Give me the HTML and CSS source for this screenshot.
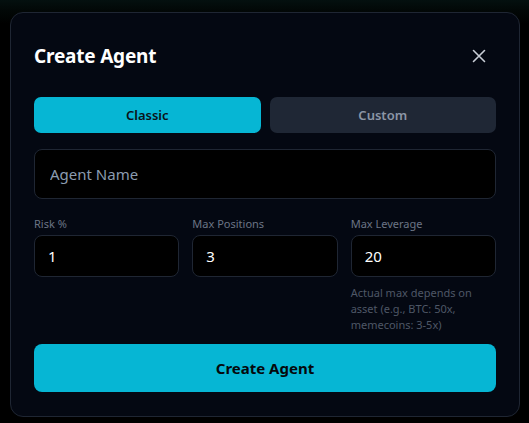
FILE: index.html
```html
<!DOCTYPE html>
<html lang="en">
  <head>
    <meta charset="UTF-8" />
    <title>Create Agent</title>
    <link rel="stylesheet" href="styles.css">
  </head>
  <body>
    <div class="modal">
      <div class="modal-header">
        <h2>Create Agent</h2>
        <button class="close" type="button" aria-label="Close">
          <svg width="14" height="14" viewBox="0 0 14 14">
            <path d="M1.5 1.5 L12.5 12.5 M12.5 1.5 L1.5 12.5" stroke="currentColor" stroke-width="1.6" stroke-linecap="round" fill="none" />
          </svg>
        </button>
      </div>

      <div class="tabs">
        <button class="tab active" type="button">Classic</button>
        <button class="tab" type="button">Custom</button>
      </div>

      <input class="name-input" type="text" placeholder="Agent Name" />

      <div class="fields">
        <div class="field">
          <label for="risk">Risk %</label>
          <input id="risk" type="text" value="1" />
        </div>
        <div class="field">
          <label for="max_pos">Max Positions</label>
          <input id="max_pos" type="text" value="3" />
        </div>
        <div class="field">
          <label for="max_lev">Max Leverage</label>
          <input id="max_lev" type="text" value="20" />
          <p class="hint">Actual max depends on asset (e.g., BTC: 50x, memecoins: 3-5x)</p>
        </div>
      </div>

      <button class="submit" type="button">Create Agent</button>
    </div>
  </body>
</html>
```

FILE: styles.css
```css
body {
  margin: 0;
  height: 423px;
  background: linear-gradient(#04100f 0, #020807 10px, #000 24px);
  font-family: "Noto Sans", sans-serif;
  padding: 12px 9px 0 10px;
  box-sizing: border-box;
}
.modal {
  background-color: #040812;
  border: 1px solid #1f2633;
  border-radius: 13px;
  padding: 23px;
  height: 405px;
  box-sizing: border-box;
}
.modal-header {
  display: flex;
  justify-content: space-between;
  align-items: center;
  height: 40px;
  margin-bottom: 21px;
}
.modal-header h2 {
  margin: 0;
  font-size: 19px;
  font-weight: 700;
  color: #fff;
  letter-spacing: -0.2px;
}
.close {
  background: none;
  border: none;
  color: #c9ced6;
  padding: 0;
  margin-right: 10px;
  display: flex;
}
.tabs {
  display: flex;
  gap: 9px;
  margin-bottom: 16px;
}
.tab {
  flex: 1;
  height: 36px;
  border: none;
  border-radius: 7px;
  background-color: #1f2735;
  color: #8c96a6;
  font-family: inherit;
  font-size: 13px;
  font-weight: 600;
}
.tab.active {
  background-color: #06b6d4;
  color: #0b1218;
}
input {
  display: block;
  width: 100%;
  box-sizing: border-box;
  background-color: #000;
  border: 1px solid #1f2633;
  border-radius: 8px;
  color: #fff;
  font-family: inherit;
  outline: none;
}
.name-input {
  height: 50px;
  padding: 0 15px;
  font-size: 15px;
  margin-bottom: 17px;
}
.name-input::placeholder {
  color: #8b9cb0;
}
.fields {
  display: grid;
  grid-template-columns: 1fr 1fr 1fr;
  gap: 13px;
  margin-bottom: 11px;
}
.field label {
  display: block;
  font-size: 11px;
  color: #6b7585;
  margin-bottom: 4px;
  height: 15px;
}
.field input {
  height: 42px;
  padding: 0 13px;
  font-size: 15px;
}
.hint {
  margin: 8px 0 0;
  font-size: 11px;
  line-height: 16px;
  color: #4e5766;
}
.submit {
  display: block;
  width: 100%;
  height: 48px;
  border: none;
  border-radius: 8px;
  background-color: #06b6d4;
  color: #05090c;
  font-family: inherit;
  font-size: 15px;
  font-weight: 700;
}
```
